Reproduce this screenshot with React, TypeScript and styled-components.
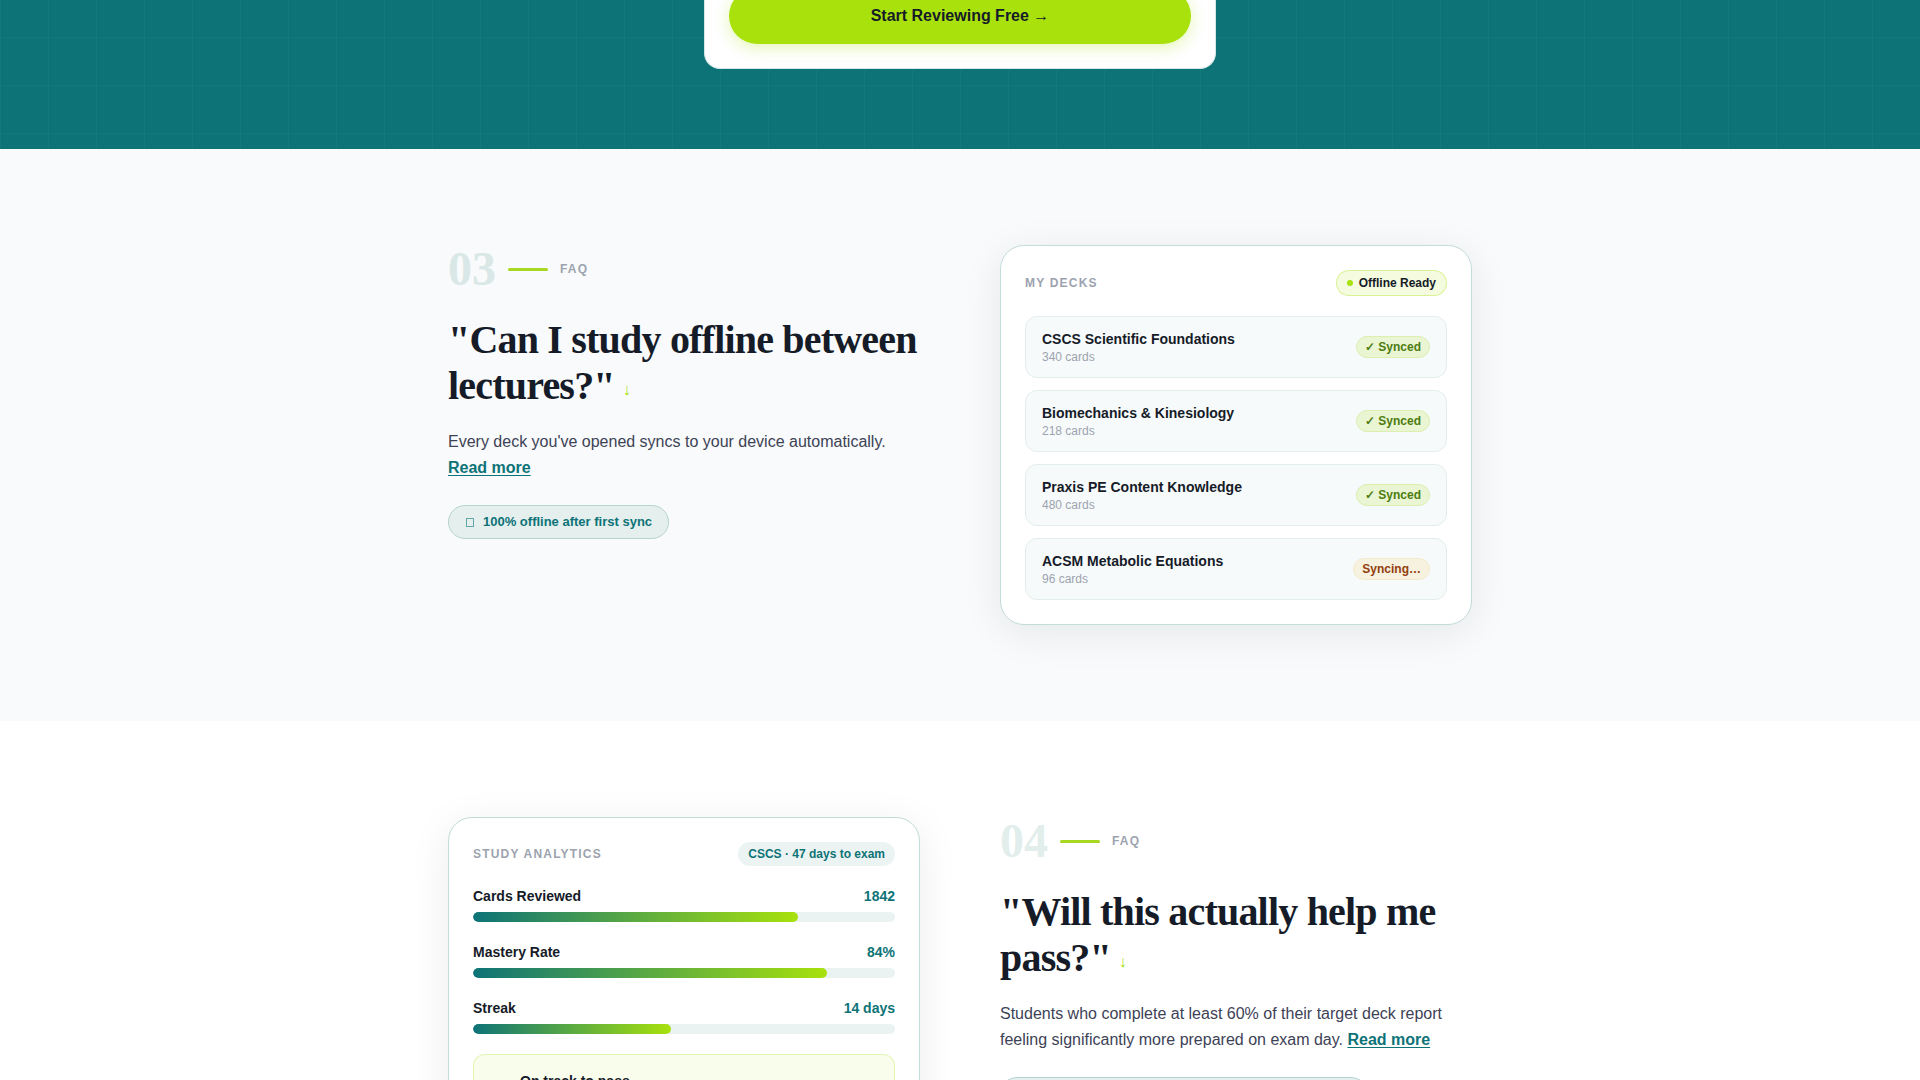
import React from "react";
import styled, { createGlobalStyle } from "styled-components";

const GlobalStyle = createGlobalStyle`
  *, *::before, *::after { box-sizing: border-box; }
  body {
    margin: 0;
    background: #ffffff;
    color: #161b28;
    font-family: "Liberation Sans", Arial, sans-serif;
    font-size: 16px;
    line-height: 24px;
  }
  h2, p, ul, dl, dd { margin: 0; padding: 0; }
  ul { list-style: none; }
`;

const Page = styled.main`
  height: 100vh;
  overflow: hidden;
`;

const Hero = styled.section`
  display: flex;
  justify-content: center;
  margin-top: -12px;
  padding: 0 24px 80px;
  background-color: #0d7377;
  background-image:
    linear-gradient(rgba(255, 255, 255, 0.03) 1px, transparent 1px),
    linear-gradient(90deg, rgba(255, 255, 255, 0.03) 1px, transparent 1px);
  background-size: 48px 48px;
  background-position: 0 1px;
`;

const SignupCard = styled.form`
  width: 100%;
  max-width: 512px;
  padding: 0 24px 24px;
  background: #ffffff;
  border: 1px solid #d5e7e6;
  border-top: 0;
  border-radius: 0 0 16px 16px;
`;

const PrimaryButton = styled.button`
  width: 100%;
  height: 56px;
  border: 0;
  border-radius: 28px;
  background: #a8e10c;
  color: #161b28;
  font: bold 16px/24px "Liberation Sans", Arial, sans-serif;
  box-shadow: 0 4px 16px rgba(168, 225, 12, 0.3);
  cursor: pointer;
`;

const Section = styled.section<{ $tinted?: boolean }>`
  padding: 96px 24px;
  background: ${(p) => (p.$tinted ? "#f8fafb" : "#ffffff")};
`;

const Columns = styled.div`
  display: grid;
  grid-template-columns: repeat(2, minmax(0, 1fr));
  gap: 80px;
  align-items: start;
  max-width: 1024px;
  margin: 0 auto;
`;

const Eyebrow = styled.div`
  display: flex;
  align-items: center;
  gap: 12px;
  margin-bottom: 24px;
`;

const Ordinal = styled.span<{ $faint: boolean }>`
  color: ${(p) => (p.$faint ? "#e2eeec" : "#d9e8e6")};
  font: bold 48px/48px "Liberation Serif", "Times New Roman", serif;
`;

const Dash = styled.span`
  width: 40px;
  height: 3px;
  border-radius: 2px;
  background: #a8d820;
`;

const Overline = styled.span`
  color: #9ca3af;
  font-size: 12px;
  line-height: 16px;
  font-weight: bold;
  letter-spacing: 0.1em;
  text-transform: uppercase;
`;

const Question = styled.h2`
  margin-bottom: 20px;
  font: bold 40px/46px "Liberation Serif", "Times New Roman", serif;
  letter-spacing: -0.02em;
`;

const Arrow = styled.span`
  margin-left: 8px;
  color: #a8e10c;
  font-size: 16px;
  line-height: 16px;
  vertical-align: middle;
`;

const Answer = styled.p`
  margin-bottom: 24px;
  color: #3d4256;
  line-height: 26px;
`;

const ReadMore = styled.a`
  color: #0d7377;
  font-weight: bold;
  text-decoration: underline;
  text-underline-offset: 2px;
`;

const Fact = styled.div`
  display: inline-flex;
  align-items: center;
  gap: 8px;
  padding: 6px 16px;
  border: 1px solid #b5d4d0;
  border-radius: 17px;
  background: #e5efee;
  color: #0d7377;
  font-size: 13px;
  line-height: 20px;
  font-weight: bold;
`;

const GlyphBox = styled.span<{ $large?: boolean }>`
  width: ${(p) => (p.$large ? 16 : 8)}px;
  height: ${(p) => (p.$large ? 16 : 9)}px;
  margin: 0 1px;
  border: 1px solid currentColor;
  opacity: 0.6;
`;

const Card = styled.div`
  padding: 24px;
  background: #ffffff;
  border: 1px solid #c3dcd9;
  border-radius: 24px;
  box-shadow: 0 8px 40px rgba(17, 24, 39, 0.08);
`;

const CardHeader = styled.div`
  display: flex;
  align-items: center;
  justify-content: space-between;
  margin-bottom: 20px;
`;

const ReadyPill = styled.span`
  display: flex;
  align-items: center;
  gap: 6px;
  padding: 4px 10px;
  border: 1px solid rgba(168, 225, 12, 0.35);
  border-radius: 13px;
  background: #f4fbdf;
  font-size: 12px;
  line-height: 16px;
  font-weight: bold;
`;

const Dot = styled.span`
  width: 6px;
  height: 6px;
  border-radius: 50%;
  background: #a8e10c;
`;

const ExamPill = styled.span`
  padding: 4px 10px;
  border-radius: 12px;
  background: #ebf4f3;
  color: #0d7377;
  font-size: 12px;
  line-height: 16px;
  font-weight: bold;
`;

const DeckList = styled.ul`
  display: grid;
  gap: 12px;
`;

const DeckRow = styled.li`
  display: flex;
  align-items: center;
  justify-content: space-between;
  padding: 12px 16px;
  border: 1px solid #e3eeec;
  border-radius: 12px;
  background: #f7fafb;
`;

const DeckName = styled.div`
  font-size: 14px;
  line-height: 20px;
  font-weight: bold;
`;

const DeckCount = styled.div`
  color: #9ca3af;
  font-size: 12px;
  line-height: 16px;
`;

const SyncBadge = styled.span<{ $pending: boolean }>`
  padding: 2px 8px;
  border: 1px solid ${(p) => (p.$pending ? "#f3ebcb" : "#dcefb0")};
  border-radius: 11px;
  background: ${(p) => (p.$pending ? "#f7f1e0" : "#eaf5d3")};
  color: ${(p) => (p.$pending ? "#92400e" : "#4d7c0f")};
  font-size: 12px;
  line-height: 16px;
  font-weight: bold;
`;

const Stats = styled.dl`
  display: grid;
  gap: 20px;
  margin-bottom: 20px;
`;

const Stat = styled.div`
  display: grid;
  grid-template-columns: 1fr auto;
  row-gap: 6px;
  font-size: 14px;
  line-height: 20px;
  font-weight: bold;
`;

const StatValue = styled.dd`
  color: #0d7377;
`;

const Track = styled.dd`
  grid-column: 1 / -1;
  height: 10px;
  border-radius: 5px;
  overflow: hidden;
  background: #ebf3f2;
`;

const Fill = styled.div`
  height: 100%;
  border-radius: 5px;
  background: linear-gradient(90deg, #0d7377, #a8e10c);
`;

const Callout = styled.div`
  display: flex;
  align-items: center;
  gap: 12px;
  min-height: 70px;
  padding: 16px;
  border: 1px solid rgba(168, 225, 12, 0.25);
  border-radius: 12px;
  background: #f9fdec;
`;

const CalloutText = styled.div`
  align-self: flex-start;
`;

const decks = [
  { name: "CSCS Scientific Foundations", cards: 340, synced: true },
  { name: "Biomechanics & Kinesiology", cards: 218, synced: true },
  { name: "Praxis PE Content Knowledge", cards: 480, synced: true },
  { name: "ACSM Metabolic Equations", cards: 96, synced: false },
];

const stats = [
  { label: "Cards Reviewed", value: "1842", percent: 77 },
  { label: "Mastery Rate", value: "84%", percent: 84 },
  { label: "Streak", value: "14 days", percent: 47 },
];

const FactPlaceholder = styled(Fact)`
  display: flex;
  max-width: 368px;
  height: 34px;
`;

type FaqProps = {
  ordinal: string;
  question: string;
  answer: string;
  fact?: string;
};

function Faq({ ordinal, question, answer, fact }: FaqProps) {
  return (
    <div>
      <Eyebrow>
        <Ordinal $faint={!fact}>{ordinal}</Ordinal>
        <Dash />
        <Overline>FAQ</Overline>
      </Eyebrow>
      <Question>
        "{question}"<Arrow>↓</Arrow>
      </Question>
      <Answer>
        {answer} <ReadMore href="#">Read more</ReadMore>
      </Answer>
      {fact ? (
        <Fact>
          <GlyphBox />
          <span>{fact}</span>
        </Fact>
      ) : (
        <FactPlaceholder />
      )}
    </div>
  );
}

function Decks() {
  return (
    <Card>
      <CardHeader>
        <Overline>My Decks</Overline>
        <ReadyPill>
          <Dot />
          Offline Ready
        </ReadyPill>
      </CardHeader>
      <DeckList>
        {decks.map((deck) => (
          <DeckRow key={deck.name}>
            <div>
              <DeckName>{deck.name}</DeckName>
              <DeckCount>{deck.cards} cards</DeckCount>
            </div>
            <SyncBadge $pending={!deck.synced}>{deck.synced ? "✓ Synced" : "Syncing…"}</SyncBadge>
          </DeckRow>
        ))}
      </DeckList>
    </Card>
  );
}

function Analytics() {
  return (
    <Card>
      <CardHeader>
        <Overline>Study Analytics</Overline>
        <ExamPill>CSCS · 47 days to exam</ExamPill>
      </CardHeader>
      <Stats>
        {stats.map((stat) => (
          <Stat key={stat.label}>
            <dt>{stat.label}</dt>
            <StatValue>{stat.value}</StatValue>
            <Track>
              <Fill style={{ width: `${stat.percent}%` }} />
            </Track>
          </Stat>
        ))}
      </Stats>
      <Callout>
        <GlyphBox $large />
        <CalloutText>
          <DeckName>On track to pass</DeckName>
        </CalloutText>
      </Callout>
    </Card>
  );
}

export default function App() {
  return (
    <Page>
      <GlobalStyle />
      <Hero>
        <SignupCard onSubmit={(e) => e.preventDefault()}>
          <PrimaryButton type="submit">Start Reviewing Free →</PrimaryButton>
        </SignupCard>
      </Hero>
      <Section $tinted>
        <Columns>
          <Faq
            ordinal="03"
            question="Can I study offline between lectures?"
            answer="Every deck you've opened syncs to your device automatically."
            fact="100% offline after first sync"
          />
          <Decks />
        </Columns>
      </Section>
      <Section>
        <Columns>
          <Analytics />
          <Faq
            ordinal="04"
            question="Will this actually help me pass?"
            answer="Students who complete at least 60% of their target deck report feeling significantly more prepared on exam day."
          />
        </Columns>
      </Section>
    </Page>
  );
}
